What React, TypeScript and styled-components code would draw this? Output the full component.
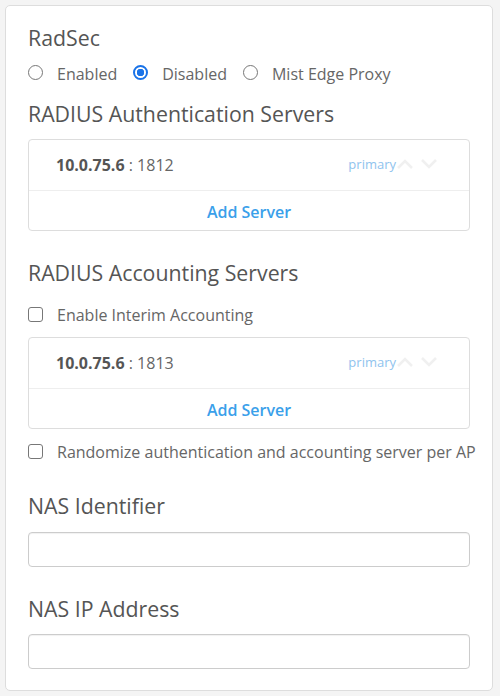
import React from "react";
import styled, { createGlobalStyle } from "styled-components";

const GlobalStyle = createGlobalStyle`
  html, body {
    margin: 0;
    padding: 0;
    background: #f4f4f4;
  }
  body {
    font-family: "Open Sans", "Liberation Sans", sans-serif;
    color: #666666;
  }
  * {
    box-sizing: border-box;
  }
`;

const Page = styled.div`
  padding: 5px 7px 4px 5px;
`;

const Card = styled.div`
  background: #ffffff;
  border: 1px solid #dddddd;
  border-radius: 5px;
  padding: 18px 22px 21px 22px;
  display: flex;
  flex-direction: column;
`;

const SectionTitle = styled.div<{ $gap?: number }>`
  margin-top: ${({ $gap }) => $gap ?? 0}px;
  font-size: 21.3px;
  line-height: 28px;
  color: #555555;
`;

const RadioGroup = styled.div`
  margin-top: 10px;
  display: flex;
  align-items: center;
  gap: 16px;
  height: 24px;
`;

const Option = styled.label`
  display: flex;
  align-items: center;
  gap: 14px;
  font-size: 16px;
  line-height: 20px;
  color: #666666;
`;

const Radio = styled.span<{ $checked?: boolean }>`
  width: 15px;
  height: 15px;
  border-radius: 50%;
  border: ${({ $checked }) => ($checked ? "2px solid #1a73e8" : "1.5px solid #777777")};
  background: ${({ $checked }) =>
    $checked ? "radial-gradient(circle, #1a73e8 0 3.5px, #ffffff 4px)" : "#ffffff"};
  margin-top: -3px;
`;

const CheckRow = styled.label<{ $gap: number }>`
  margin-top: ${({ $gap }) => $gap}px;
  display: flex;
  align-items: center;
  gap: 14px;
  height: 24px;
  font-size: 16px;
  color: #666666;
  white-space: nowrap;
`;

const Checkbox = styled.span`
  flex: none;
  width: 15px;
  height: 15px;
  border: 1.5px solid #777777;
  border-radius: 3px;
  background: #ffffff;
  margin-top: -1px;
`;

const ServerList = styled.div<{ $gap: number }>`
  margin-top: ${({ $gap }) => $gap}px;
  border: 1px solid #dddddd;
  border-radius: 4px;
`;

const ServerRow = styled.div`
  height: 51px;
  display: flex;
  align-items: center;
  padding: 0 31px 0 27px;
  border-bottom: 1px solid #eeeeee;
  font-size: 16px;
  color: #666666;
`;

const Address = styled.span`
  flex: 1;
  strong {
    font-weight: 700;
    color: #555555;
  }
`;

const Primary = styled.span`
  font-size: 13px;
  color: #8fc3ee;
  margin-top: -3px;
`;

const Arrows = styled.span`
  display: flex;
  gap: 6px;
  margin-top: -3px;
`;

const AddRow = styled.div`
  height: 39px;
  padding-top: 2px;
  display: flex;
  align-items: center;
  justify-content: center;
  font-size: 16px;
  font-weight: 600;
  color: #3aa0ea;
`;

const FieldLabel = styled(SectionTitle)``;

const TextInput = styled.input<{ $gap: number }>`
  margin-top: ${({ $gap }) => $gap}px;
  width: 100%;
  height: 35px;
  border: 1px solid #cccccc;
  border-radius: 4px;
  box-shadow: inset 0 1px 1px rgba(0, 0, 0, 0.06);
  background: #ffffff;
  font-family: inherit;
  font-size: 15px;
`;

const Chevron = ({ up }: { up?: boolean }) => (
  <svg width="18" height="12" viewBox="0 0 18 12">
    <path
      d={up ? "M2 10 L9 3 L16 10" : "M2 2 L9 9 L16 2"}
      fill="none"
      stroke="#f0f0f0"
      strokeWidth="2.6"
    />
  </svg>
);

const Server = ({ ip, port, gap }: { ip: string; port: string; gap: number }) => (
  <ServerList $gap={gap}>
    <ServerRow>
      <Address>
        <strong>{ip}</strong> : {port}
      </Address>
      <Primary>primary</Primary>
      <Arrows>
        <Chevron up />
        <Chevron />
      </Arrows>
    </ServerRow>
    <AddRow>Add Server</AddRow>
  </ServerList>
);

export default function App() {
  return (
    <Page>
      <GlobalStyle />
      <Card>
        <SectionTitle>RadSec</SectionTitle>
        <RadioGroup>
          <Option>
            <Radio />
            Enabled
          </Option>
          <Option>
            <Radio $checked />
            Disabled
          </Option>
          <Option>
            <Radio />
            Mist Edge Proxy
          </Option>
        </RadioGroup>
        <SectionTitle $gap={14}>RADIUS Authentication Servers</SectionTitle>
        <Server ip="10.0.75.6" port="1812" gap={11} />
        <SectionTitle $gap={28}>RADIUS Accounting Servers</SectionTitle>
        <CheckRow $gap={16}>
          <Checkbox />
          Enable Interim Accounting
        </CheckRow>
        <Server ip="10.0.75.6" port="1813" gap={10} />
        <CheckRow $gap={11}>
          <Checkbox />
          Randomize authentication and accounting server per AP
        </CheckRow>
        <FieldLabel $gap={28}>NAS Identifier</FieldLabel>
        <TextInput $gap={12} />
        <FieldLabel $gap={28}>NAS IP Address</FieldLabel>
        <TextInput $gap={11} />
      </Card>
    </Page>
  );
}
